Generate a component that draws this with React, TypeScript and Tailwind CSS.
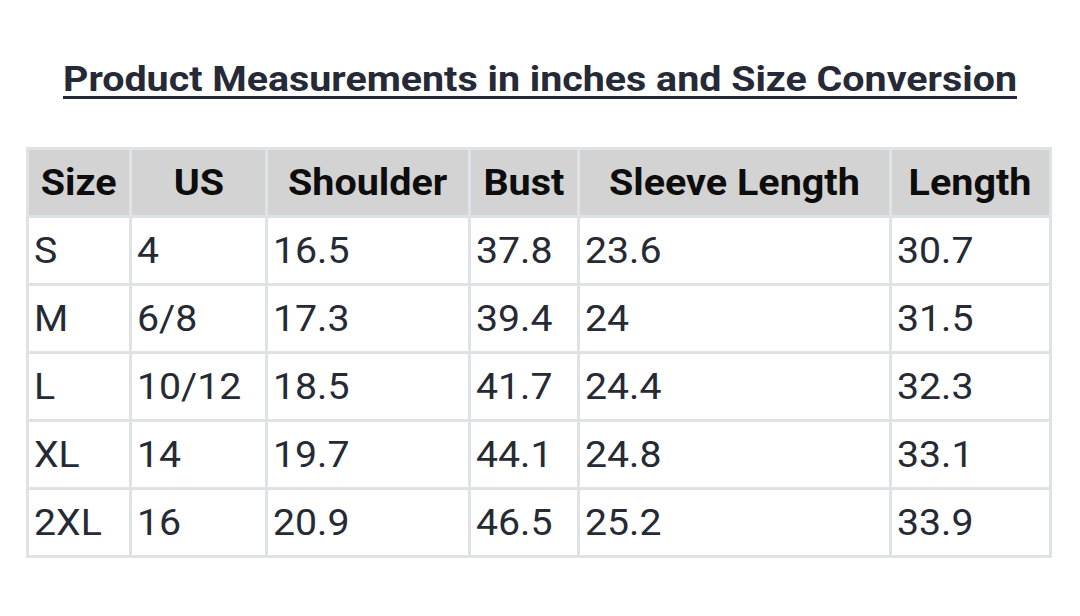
const headers = ['Size', 'US', 'Shoulder', 'Bust', 'Sleeve Length', 'Length'];

const rows = [
    ['S', '4', '16.5', '37.8', '23.6', '30.7'],
    ['M', '6/8', '17.3', '39.4', '24', '31.5'],
    ['L', '10/12', '18.5', '41.7', '24.4', '32.3'],
    ['XL', '14', '19.7', '44.1', '24.8', '33.1'],
    ['2XL', '16', '20.9', '46.5', '25.2', '33.9'],
];

export default function App() {
    return (
        <div className="w-[1080px] h-[616px] bg-white font-['Roboto',sans-serif] overflow-hidden">
            {/* Title */}
            <div className="pt-[59px] flex justify-center">
                <h1 className="inline-block origin-center scale-x-[1.125] text-[35px] leading-[41px] font-bold text-[#262a36] underline decoration-[3px] underline-offset-[5px]">
                    Product Measurements in inches and Size Conversion
                </h1>
            </div>

            {/* Size table */}
            <div className="mt-[47px] ml-[26px] w-max grid grid-cols-[100px_133px_200px_106px_309px_157px] gap-[3px] p-[3px] bg-[#dfe3e7]">
                {headers.map((h) => (
                    <div
                        key={h}
                        className="h-[65px] bg-[#d3d3d3] flex items-center justify-center text-[36px] font-bold text-[#0d0d0d]"
                    >
                        <span className="inline-block origin-center scale-x-[1.097]">{h}</span>
                    </div>
                ))}
                {rows.map((row) =>
                    row.map((cell, i) => (
                        <div
                            key={row[0] + i}
                            className="h-[65px] bg-white flex items-center pl-[5px] text-[36px] text-[#262a35]"
                        >
                            <span className="inline-block origin-left scale-x-[1.09]">{cell}</span>
                        </div>
                    ))
                )}
            </div>
        </div>
    );
}
